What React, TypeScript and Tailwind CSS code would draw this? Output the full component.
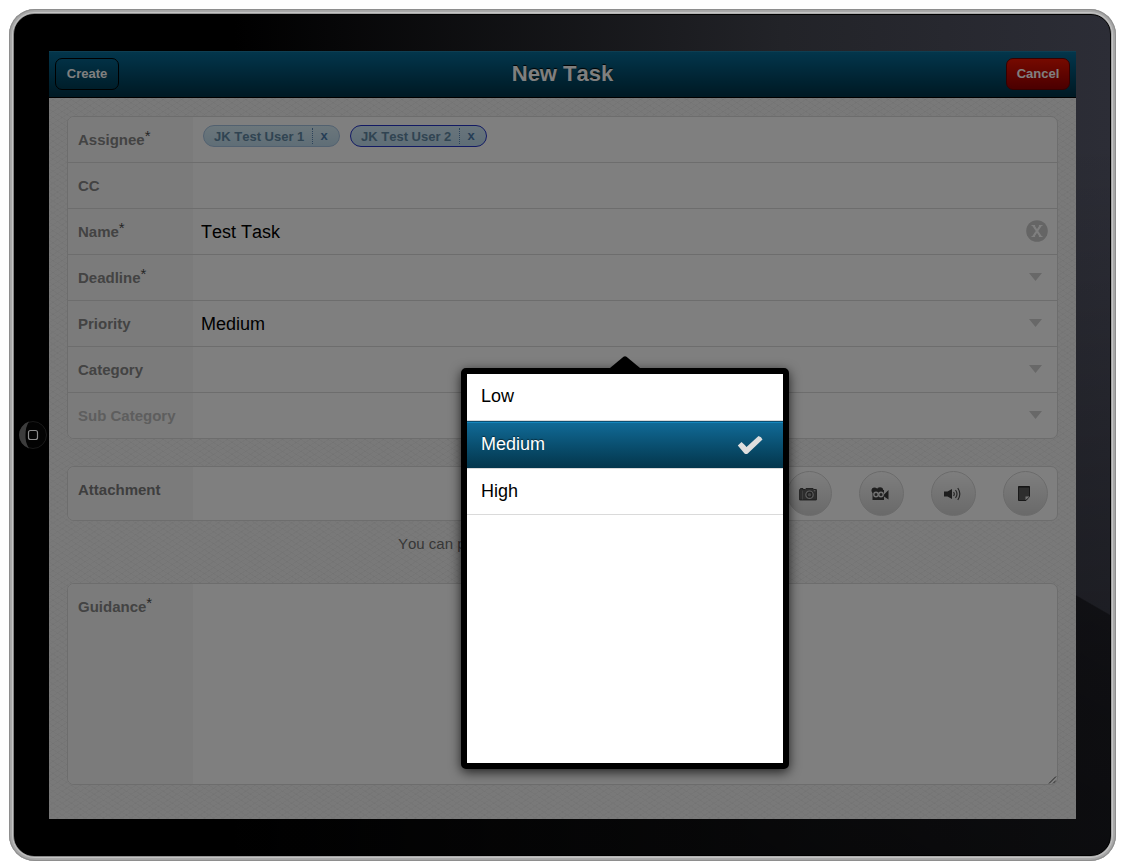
import type { ReactNode } from "react";

const circle =
  "flex size-[45px] items-center justify-center rounded-full border border-[#d6d6d6] bg-linear-to-b from-[#fdfdfd] to-[#d4d4d4]";

function Row({
  label,
  htmlFor,
  required,
  muted,
  dark,
  children,
  height = "h-[46px]",
}: {
  label: string;
  htmlFor: string;
  required?: boolean;
  muted?: boolean;
  dark?: boolean;
  children: ReactNode;
  height?: string;
}) {
  const tone = muted ? "text-[#bcbcbc]" : dark ? "text-[#7c7c7c]" : "text-[#868686]";
  return (
    <div className={`flex border-b border-[#dadada] last:border-b-0 ${height}`}>
      <div className="w-[125px] shrink-0 bg-[#f7f7f7] pt-3 pl-[10px]">
        <label htmlFor={htmlFor} className={`flex text-[15px] leading-[22px] font-bold ${tone}`}>
          {label}
          {required && <span className="-mt-1 font-normal text-[#4c4c4c]">*</span>}
        </label>
      </div>
      <div className="flex min-w-0 flex-1">{children}</div>
    </div>
  );
}

function Group({ children }: { children: ReactNode }) {
  return (
    <section className="overflow-hidden rounded-[7px] border border-[#dadada] bg-white">
      {children}
    </section>
  );
}

function Chip({ name, active }: { name: string; active?: boolean }) {
  return (
    <span
      className={`flex h-[22px] items-center rounded-full border bg-linear-to-b pl-[10px] text-[13px] font-bold text-[#6189a4] ${
        active
          ? "border-[#2434c8] from-[#d2eaf8] to-[#bfdcee]"
          : "border-[#a4c2e0] from-[#d8eef8] to-[#bfdcee]"
      }`}
    >
      <span className="w-[98px] pt-px whitespace-nowrap">{name}</span>
      <button
        type="button"
        aria-label={`Remove ${name}`}
        className="flex h-4 w-[27px] items-center justify-center border-l border-dotted border-[#5b87b4] pr-1 text-[13px] text-[#4c7cac]"
      >
        x
      </button>
    </span>
  );
}

function Drop({ id, value, options }: { id: string; value: string; options: string[] }) {
  return (
    <div className="flex flex-1 items-center pr-[15px]">
      <select
        id={id}
        defaultValue={value}
        className="h-full flex-1 appearance-none bg-transparent pt-0.5 pl-2 text-[18px] text-black"
      >
        {options.map((o) => (
          <option key={o}>{o}</option>
        ))}
      </select>
      <svg className="mb-0.5 h-2 w-[13px]" viewBox="0 0 13 8" aria-hidden="true">
        <path d="M0 0h13L6.5 8z" fill="#d0d0d0" />
      </svg>
    </div>
  );
}

const levels = ["Low", "Medium", "High"];

export default function App() {
  return (
    <main className="min-h-screen bg-white pt-[9px] pr-[13px] pb-[6px] pl-[9px] font-['Liberation_Sans',Arial,sans-serif] [font-kerning:none]">
      <div className="rounded-[26px] bg-linear-to-r from-[#858585] via-[#b5b5b5] to-[#a4a4a4] p-[5px] shadow-[inset_0_0_1px_1px_#8b8b8b,inset_0_0_0_3px_#a9a9a9,inset_0_0_0_4px_#c4c4c4]">
        <div className="relative rounded-[20px] border border-black bg-[linear-gradient(210deg,transparent_40.7%,#00000070_40.8%,#000000a0_70%),linear-gradient(to_bottom,transparent_15%,#00000066_80%),linear-gradient(to_right,#000_20%,#222328_70%,#2c2d36_100%)] py-9 pr-[34px] pl-[34px]">
          <button
            type="button"
            aria-label="Home"
            className="absolute top-1/2 left-1 size-7 -translate-y-1/2 rounded-full"
          >
            <svg viewBox="0 0 28 28" className="size-7" aria-hidden="true">
              <circle cx="14" cy="14" r="13.5" fill="#030303" stroke="#191919" />
              <path d="M10 .6A14 14 0 0 0 10 27.4Q6 21 6.500 14Q6.500 6 10 .6z" fill="#3c3c3c" />
              <rect x="9.500" y="9.500" width="9" height="9" rx="2" fill="#050505" stroke="#8c8c8c" strokeWidth="1.200" />
            </svg>
          </button>

          <div className="relative bg-[#f3f3f3]">
            <header className="flex h-[47px] items-center justify-between border-t border-b border-t-[#1c7ca4] border-b-black bg-linear-to-b from-[#066c98] to-[#003247] px-[6px] pb-[2px]">
              <button
                type="button"
                className="h-8 w-16 rounded-[7px] border border-black pt-px text-[13px] font-bold text-white"
              >
                Create
              </button>
              <h1 className="text-[22px] font-bold text-white [text-shadow:0_-1px_1px_#000]">
                New Task
              </h1>
              <button
                type="button"
                className="h-8 w-16 rounded-[7px] border border-[#6c0000] bg-linear-to-b from-[#ec1400] to-[#960000] pt-px text-[13px] font-bold text-white"
              >
                Cancel
              </button>
            </header>

            <form className="bg-[repeating-linear-gradient(33deg,#00000007_0_1px,transparent_1px_5px),repeating-linear-gradient(-33deg,#00000007_0_1px,transparent_1px_5px)] px-[18px] pt-[18px] pb-[34px]">
              <Group>
                <Row label="Assignee" htmlFor="assignee" required>
                  <div className="flex flex-1 items-start gap-[10px] pt-2 pl-[10px]">
                    <Chip name="JK Test User 1" />
                    <Chip name="JK Test User 2" active />
                    <input id="assignee" className="h-[22px] min-w-0 flex-1 bg-transparent text-[18px]" />
                  </div>
                </Row>
                <Row label="CC" htmlFor="cc">
                  <input id="cc" className="min-w-0 flex-1 px-2 text-[18px]" />
                </Row>
                <Row label="Name" htmlFor="name" required>
                  <input
                    id="name"
                    defaultValue="Test Task"
                    className="min-w-0 flex-1 px-2 pt-0.5 text-[18px] text-black"
                  />
                  <button type="button" aria-label="Clear name" className="mr-[9px] pb-0.5">
                    <svg viewBox="0 0 22 22" className="size-[22px]" aria-hidden="true">
                      <circle cx="11" cy="11" r="10.800" fill="#cacaca" />
                      <path d="M7.300 5.500l7.400 11M14.700 5.500l-7.400 11" stroke="#fff" strokeWidth="2.200" />
                      <path d="M5.500 5.500h3.600M12.900 5.500h3.600M5.500 16.500h3.600M12.900 16.500h3.600" stroke="#fff" strokeWidth="1" />
                    </svg>
                  </button>
                </Row>
                <Row label="Deadline" htmlFor="deadline" required>
                  <Drop id="deadline" value="" options={[""]} />
                </Row>
                <Row label="Priority" htmlFor="priority">
                  <Drop id="priority" value="Medium" options={levels} />
                </Row>
                <Row label="Category" htmlFor="category">
                  <Drop id="category" value="" options={[""]} />
                </Row>
                <Row label="Sub Category" htmlFor="subcategory" muted height="h-[45px]">
                  <Drop id="subcategory" value="" options={[""]} />
                </Row>
              </Group>

              <div className="mt-[27px]">
                <Group>
                  <Row label="Attachment" htmlFor="camera" dark height="h-[53px]">
                    <div className="flex flex-1 items-center justify-end gap-[27px] pr-[9px]">
                      <button id="camera" type="button" aria-label="Photo" className={circle}>
                        <svg viewBox="0 0 18 14" className="mr-1 h-[14px] w-[18px]" aria-hidden="true">
                          <path d="M1.500 1.500h2.500v1h2L7 1.500h7l1 1h2q.7 0 .7.700v9q0 .8-.7.800H1q-.7 0-.7-.8v-9q0-.7.700-.7h.5z" fill="#5a5a5a" stroke="#303030" strokeWidth=".8" />
                          <path d="M3.500 3.500v9" stroke="#8a8a8a" strokeWidth=".8" />
                          <circle cx="10.500" cy="7.700" r="3.700" fill="#444" stroke="#bdbdbd" strokeWidth="1.200" />
                          <circle cx="10.500" cy="7.700" r="1.800" fill="#8a8a8a" />
                          <path d="M14.800 3.800h1.500" stroke="#ccc" />
                        </svg>
                      </button>
                      <button type="button" aria-label="Video" className={circle}>
                        <svg viewBox="0 0 18 14" className="mr-1 h-[14px] w-[18px]" aria-hidden="true">
                          <g fill="#3c3c3c">
                            <circle cx="3.500" cy="3.500" r="3" />
                            <circle cx="9" cy="3.500" r="3.200" />
                            <path d="M1.500 3h11.500v10h-11.500zM13 7.500L17.500 3v9.500L13 9.500z" />
                          </g>
                          <circle cx="5" cy="7.500" r="2.200" fill="#444" stroke="#e4e4e4" strokeWidth="1.400" />
                          <circle cx="10" cy="7.500" r="2.200" fill="#444" stroke="#e4e4e4" strokeWidth="1.400" />
                        </svg>
                      </button>
                      <button type="button" aria-label="Audio" className={circle}>
                        <svg viewBox="0 0 18 14" className="mr-1 h-[14px] w-[18px]" aria-hidden="true">
                          <path d="M1 4.500h3.500L9 2v10L4.500 9.500H1z" fill="#3c3c3c" />
                          <path d="M10.500 5q1.600 2 0 4M12.500 3q3 4 0 8M14.800 1q4 6 0 12" fill="none" stroke="#4c4c4c" strokeWidth="1.200" />
                        </svg>
                      </button>
                      <button type="button" aria-label="Note" className={circle}>
                        <svg viewBox="0 0 12 15" className="mr-1 h-[15px] w-3" aria-hidden="true">
                          <path d="M.5.500h11v10L8 14.500H.5z" fill="#5c5c5c" stroke="#333" />
                          <path d="M.5 1h11" stroke="#222" />
                          <path d="M7.500 14V10.500h4z" fill="#ececec" />
                        </svg>
                      </button>
                    </div>
                  </Row>
                </Group>
              </div>

              <p className="mt-[13px] pl-[331px] text-[15px] leading-[20px] text-[#6f6f6f]">You can p</p>

              <div className="mt-[29px]">
                <Group>
                  <Row label="Guidance" htmlFor="guidance" required height="h-[200px]">
                    <textarea id="guidance" className="min-w-0 flex-1 resize-none px-2 py-3 text-[18px]" />
                    <svg className="size-[9px] self-end" viewBox="0 0 9 9" aria-hidden="true">
                      <path d="M1 8.500L8 1.500M5 8.500L8 5.500" stroke="#444" />
                    </svg>
                  </Row>
                </Group>
              </div>
            </form>

            <div className="absolute inset-0 bg-black/50" />

            <div className="absolute top-[305px] right-[19px] left-36 flex flex-col items-center">
              <svg className="h-3 w-[30px]" viewBox="0 0 30 12" aria-hidden="true">
                <path d="M0 12L13.500.800q1.500-1.200 3 0L30 12z" />
              </svg>
              <div
                role="listbox"
                aria-label="Priority"
                className="h-[401px] w-[328px] rounded-[5px] border-6 border-black bg-white shadow-[0_3px_12px_#000000c0]"
              >
                {levels.map((level) => {
                  const on = level === "Medium";
                  return (
                    <button
                      key={level}
                      type="button"
                      role="option"
                      aria-selected={on}
                      className={`flex w-full items-center justify-between border-b border-[#dadada] pr-5 pb-px pl-[14px] text-[18px] ${
                        on
                          ? "h-12 border-t border-t-[#0b4f73] bg-linear-to-b from-[#116b98] to-[#04364c] text-white shadow-[inset_0_1px_0_#1586bc] [text-shadow:0_-1px_1px_#0008]"
                          : "h-[46px] text-black first:h-[47px]"
                      }`}
                    >
                      {level}
                      {on && (
                        <svg viewBox="0 0 26 20" className="h-5 w-[26px]" aria-hidden="true">
                          <path d="M.8 10.500L4.500 7Q8 10 9.500 12L21.500 1Q24.500 1.500 25.500 4.500L10.500 18.800Q9 19.500 7.500 18.500z" fill="#dedede" />
                        </svg>
                      )}
                    </button>
                  );
                })}
              </div>
            </div>
          </div>
        </div>
      </div>
    </main>
  );
}
